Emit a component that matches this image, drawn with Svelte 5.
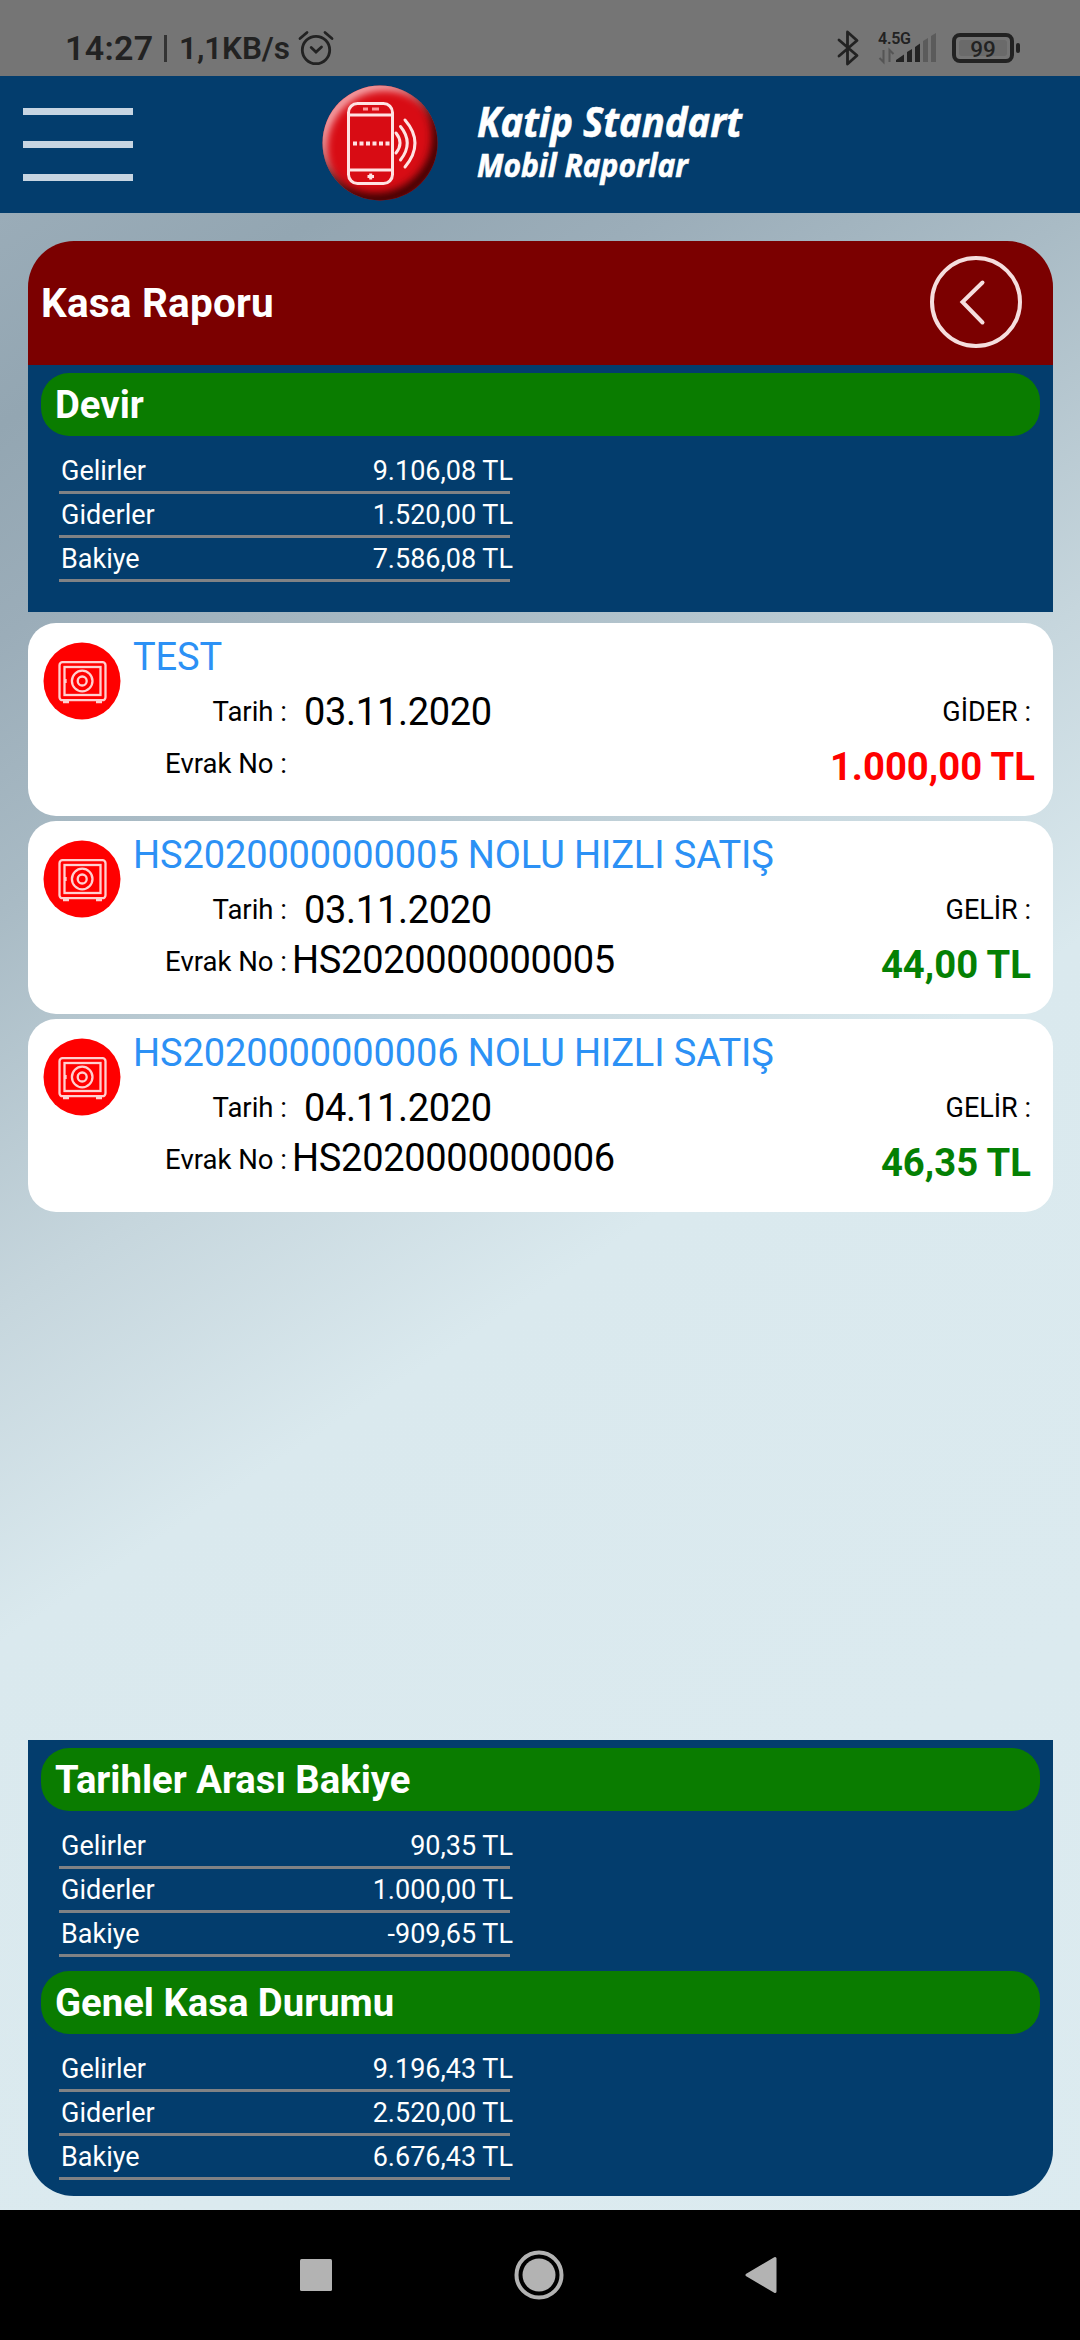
<script lang="ts">
    type Row = { label: string, value: string };
    type Entry = { title: string, date: string, docNo: string, kind: string, amount: string, expense: boolean };

    const carried: Row[] = [
        { label: "Gelirler", value: "9.106,08 TL" },
        { label: "Giderler", value: "1.520,00 TL" },
        { label: "Bakiye", value: "7.586,08 TL" },
    ];
    const period: Row[] = [
        { label: "Gelirler", value: "90,35 TL" },
        { label: "Giderler", value: "1.000,00 TL" },
        { label: "Bakiye", value: "-909,65 TL" },
    ];
    const overall: Row[] = [
        { label: "Gelirler", value: "9.196,43 TL" },
        { label: "Giderler", value: "2.520,00 TL" },
        { label: "Bakiye", value: "6.676,43 TL" },
    ];
    const entries: Entry[] = [
        { title: "TEST", date: "03.11.2020", docNo: "", kind: "GİDER :", amount: "1.000,00 TL", expense: true },
        { title: "HS2020000000005 NOLU HIZLI SATIŞ", date: "03.11.2020", docNo: "HS2020000000005", kind: "GELİR :", amount: "44,00 TL", expense: false },
        { title: "HS2020000000006 NOLU HIZLI SATIŞ", date: "04.11.2020", docNo: "HS2020000000006", kind: "GELİR :", amount: "46,35 TL", expense: false },
    ];
</script>

{#snippet summary(title: string, rows: Row[])}
    <section class="summary">
        <h2>{title}</h2>
        <ul>
            {#each rows as row}
                <li><span>{row.label}</span><span class="value">{row.value}</span></li>
            {/each}
        </ul>
    </section>
{/snippet}

<div class="screen">
    <div class="status">
        <span class="time">14:27</span>
        <i class="sep"></i>
        <span class="speed">1,1KB/s</span>
        <svg class="alarm" width="36" height="36" viewBox="0 0 36 36" fill="none" stroke="#222" stroke-width="2.8" stroke-linecap="round">
            <circle cx="18" cy="20" r="13.7" />
            <path d="M2 8.500L9 2.500M27 2.500L34 8.500M13.200 17.500L18 22L23.500 17" />
        </svg>
        <svg class="bluetooth" width="22" height="36" viewBox="0 0 22 36" fill="none" stroke="#222" stroke-width="2.8" stroke-linejoin="round" stroke-linecap="round">
            <path d="M2 10L20 25.500L10.500 34V2L20 10.500L2 26" />
        </svg>
        <svg class="signal" width="62" height="36" viewBox="0 0 62 36">
            <text x="0" y="13.500" font-size="16" font-weight="600" textLength="33" fill="#222">4.5G</text>
            <path d="M5.500 20V32L1.500 28M11.500 32V20L15.500 24" fill="none" stroke="#555" stroke-width="2" />
            <path d="M18 32V30L26 24.500V32ZM29 32V22L34 19V32ZM37 32V17L42 13.500V32Z" fill="#222" />
            <path d="M45 32V11L50 8V32ZM53 32V6L58 3V32Z" fill="#5b5b5b" />
        </svg>
        <svg class="battery" width="70" height="32" viewBox="0 0 70 32">
            <rect x="2" y="3" width="58" height="26" rx="6" fill="none" stroke="#222" stroke-width="4" />
            <rect x="7" y="8" width="48" height="16" rx="3" fill="#6a6a6a" />
            <rect x="64" y="11" width="4" height="10" rx="2" fill="#222" />
            <text x="31" y="24.500" font-size="22.500" font-weight="500" text-anchor="middle" fill="#222">99</text>
        </svg>
    </div>

    <header>
        <div class="menu"><i></i><i></i><i></i></div>
        <svg class="logo" width="116" height="116" viewBox="0 0 116 116">
            <defs>
                <clipPath id="disc"><circle cx="58" cy="58" r="57.500" /></clipPath>
                <filter id="soft" x="-30%" y="-30%" width="160%" height="160%"><feGaussianBlur stdDeviation="4.500" /></filter>
            </defs>
            <g clip-path="url(#disc)">
                <rect width="116" height="116" fill="#d80c14" />
                <circle cx="63" cy="64" r="64" fill="none" stroke="#f9bcc0" stroke-width="10" filter="url(#soft)" />
                <circle cx="53" cy="51" r="63" fill="none" stroke="#300" stroke-width="11" filter="url(#soft)" />
            </g>
            <g fill="none" stroke="#ffe3e3" stroke-width="3">
                <rect x="26.500" y="18.500" width="44" height="80" rx="9" />
                <path d="M27 30H70M27 85H70" />
                <path d="M31 58.500H70" stroke-width="4" stroke-dasharray="4 2.500" />
                <path d="M41 24H46M50 24H57" stroke-width="3" stroke="#ff9a9c" />
                <path d="M45.500 91.500H52M48.700 88.500V94.500" />
                <path d="M74 48Q82 58 74 68M78.500 41.500Q92 58 78.500 75M83 35Q103 58 83 82" stroke-linecap="round" />
            </g>
        </svg>
        <svg class="brand" width="290" height="110" viewBox="0 0 290 110">
            <text x="0" y="51" font-size="41" textLength="265" lengthAdjust="spacingAndGlyphs">Katip Standart</text>
            <text x="0" y="91" font-size="31.500" textLength="211" lengthAdjust="spacingAndGlyphs">Mobil Raporlar</text>
        </svg>
    </header>

    <main>
        <div class="title">
            <h1>Kasa Raporu</h1>
            <svg width="96" height="96" viewBox="0 0 96 96" fill="none" stroke="#f5dede" stroke-width="4" stroke-linecap="round">
                <circle cx="48" cy="48" r="44" />
                <path d="M54.500 28.500L34.500 48L54.500 68.500" />
            </svg>
        </div>
        <div class="panel top">
            {@render summary("Devir", carried)}
        </div>

        <div class="entries">
            {#each entries as entry}
                <article>
                    <svg class="safe" width="78" height="78" viewBox="0 0 78 78" fill="none" stroke="#ffd0d0" stroke-width="2.300">
                        <circle cx="39" cy="39" r="38.500" fill="#f00" stroke="none" />
                        <rect x="16.500" y="20.200" width="46" height="38" rx="3" />
                        <rect x="21.500" y="25" width="36" height="28" />
                        <circle cx="39.200" cy="39" r="10.300" />
                        <circle cx="39.200" cy="39" r="4.500" />
                        <path d="M20 60H26M53 60H59M22.500 37V41" />
                    </svg>
                    <div class="details">
                        <h3>{entry.title}</h3>
                        <div class="line">
                            <span class="label">Tarih :</span>
                            <span class="date">{entry.date}</span>
                            <span class="kind">{entry.kind}</span>
                        </div>
                        <div class="line second">
                            <span class="label">Evrak No :</span>
                            <span class="doc">{entry.docNo}</span>
                            <strong class:expense={entry.expense}>{entry.amount}</strong>
                        </div>
                    </div>
                </article>
            {/each}
        </div>

        <div class="panel bottom">
            {@render summary("Tarihler Arası Bakiye", period)}
            {@render summary("Genel Kasa Durumu", overall)}
        </div>
    </main>

    <nav>
        <svg width="34" height="34" viewBox="0 0 34 34" fill="#b3b3b3"><rect x="1" y="1" width="32" height="32" rx="1.500" /></svg>
        <svg width="50" height="50" viewBox="0 0 50 50" fill="#b3b3b3">
            <circle cx="25" cy="25" r="22.500" fill="none" stroke="#b3b3b3" stroke-width="4" />
            <circle cx="25" cy="25" r="16.500" />
        </svg>
        <svg width="34" height="38" viewBox="0 0 34 38"><path d="M3 19L31 2.500V35.500Z" fill="#b3b3b3" stroke="#b3b3b3" stroke-width="3" stroke-linejoin="round" /></svg>
    </nav>
</div>

<style>
    :global(body) {
        margin: 0;
    }

    .screen {
        width: 1080px;
        height: 2340px;
        display: flex;
        flex-direction: column;
        font-family: Roboto, sans-serif;
        background: linear-gradient(147deg, #9aacb8 7%, #93a6b2 14%, #9badb9 21%, #a9bbc5 30%, #c6d6dd 43%, #dae9ee 54%, #dcebf0 100%);
    }

    svg {
        display: block;
        flex: none;
    }

    h1, h2, h3, ul {
        margin: 0;
        padding: 0;
        list-style: none;
    }

    .status {
        height: 76px;
        flex: none;
        box-sizing: border-box;
        padding: 20px 58px 0 65px;
        display: flex;
        align-items: center;
        background: #757575;
        color: #222;
        font-weight: 500;
    }

    .time {
        font-size: 34px;
        font-weight: 600;
        width: 99px;
        letter-spacing: 0.3px;
    }

    .sep {
        width: 3px;
        height: 27px;
        background: #333;
        margin-right: 12px;
    }

    .speed {
        font-size: 31.5px;
        font-weight: 600;
        letter-spacing: -0.1px;
        width: 119px;
    }

    .bluetooth {
        margin-left: auto;
        margin-right: 19px;
    }

    .signal {
        margin-right: 12px;
    }

    header {
        height: 137px;
        flex: none;
        box-sizing: border-box;
        padding-left: 23px;
        display: flex;
        background: #033d6d;
    }

    .menu {
        width: 110px;
        padding-top: 32px;
        display: flex;
        flex-direction: column;
        gap: 26px;
    }

    .menu i {
        height: 7px;
        background: #c7d5e2;
    }

    .logo {
        margin: 9px 0 0 189px;
    }

    .brand {
        margin: 10px 0 0 39px;
        font-family: "Open Sans", sans-serif;
        font-weight: 700;
        font-style: italic;
        fill: #fff;
        stroke: #fff;
        stroke-width: 0.6px;
    }

    main {
        flex: 1;
        padding: 28px 27px 14px 28px;
        display: flex;
        flex-direction: column;
    }

    .title {
        height: 124px;
        padding: 0 29px 0 13px;
        box-sizing: border-box;
        display: flex;
        align-items: center;
        justify-content: space-between;
        background: #7b0000;
        border-radius: 46px 46px 0 0;
        color: #fff;
    }

    .title svg {
        margin-top: -3px;
    }

    h1 {
        font-size: 40.5px;
        font-weight: 700;
        letter-spacing: 0.2px;
    }

    .panel {
        padding: 8px 13px 0;
        background: #033d6d;
        color: #fff;
    }

    .top {
        height: 239px;
    }

    .bottom {
        margin-top: auto;
        height: 448px;
        display: flex;
        flex-direction: column;
        gap: 14px;
        border-radius: 0 0 46px 46px;
    }

    h2 {
        height: 63px;
        line-height: 64px;
        padding-left: 14px;
        border-radius: 28px;
        background: #0a7c00;
        font-size: 38.25px;
        font-weight: 700;
    }

    ul {
        width: 451px;
        padding: 14px 0 0 18px;
    }

    li {
        height: 41px;
        line-height: 43px;
        border-bottom: 3px solid #808285;
        display: flex;
        justify-content: space-between;
        font-size: 27px;
        padding-left: 2px;
    }

    .value {
        margin-right: -3px;
    }

    .entries {
        display: flex;
        flex-direction: column;
        gap: 5px;
        margin-top: 11px;
    }

    article {
        height: 193px;
        box-sizing: border-box;
        padding: 19px 22px 0 15px;
        display: flex;
        gap: 12px;
        border-radius: 28px;
        background: #fff;
        color: #000;
    }

    .details {
        flex: 1;
        margin-top: -9px;
    }

    h3 {
        font-size: 38px;
        line-height: 48px;
        font-weight: 400;
        letter-spacing: -0.12px;
        color: #2c91f5;
        white-space: nowrap;
    }

    .line {
        height: 54px;
        display: flex;
        align-items: flex-start;
        line-height: 62px;
        font-size: 38px;
    }

    .second {
        height: 58px;
        line-height: 58px;
    }

    .label {
        width: 154px;
        text-align: right;
        font-size: 27.5px;
    }

    .date {
        margin-left: 17px;
        letter-spacing: -0.3px;
    }

    .doc {
        margin-left: 5px;
        line-height: 55px;
        letter-spacing: -0.3px;
    }

    .kind {
        margin-left: auto;
        font-size: 27px;
    }

    strong {
        margin-left: auto;
        color: #048004;
        font-size: 38.25px;
        font-weight: 700;
        line-height: 64px;
    }

    .expense {
        color: #f00;
        margin-right: -4px;
    }

    nav {
        height: 130px;
        flex: none;
        box-sizing: border-box;
        padding: 0 302px 0 299px;
        display: flex;
        align-items: center;
        justify-content: space-between;
        background: #000;
    }
</style>
